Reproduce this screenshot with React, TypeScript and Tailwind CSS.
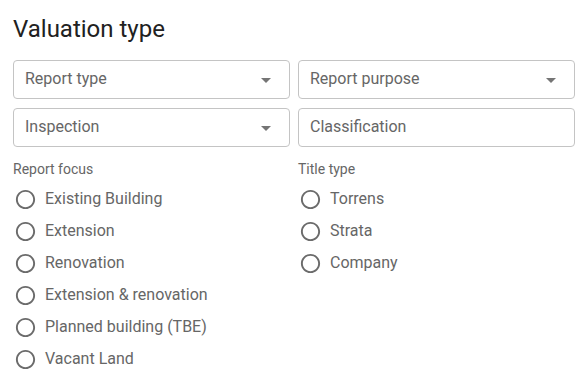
import { useState } from "react";

// --- Champs ---
function SelectField({ label }: { label: string }) {
  return (
    <div className="relative flex h-[39px] items-center rounded border border-[#c4c4c4] pb-[2px] pl-[11px] pr-3">
      <span className="text-base text-[#666]">{label}</span>
      <svg className="absolute right-[11px] top-[7px]" width="24" height="24" viewBox="0 0 24 24" fill="#757575">
        <path d="M7 10l5 5 5-5z" />
      </svg>
    </div>
  );
}

function TextField({ label }: { label: string }) {
  return (
    <div className="flex h-[39px] items-center rounded border border-[#c4c4c4] pb-[2px] pl-[11px] pr-3">
      <span className="text-base text-[#666]">{label}</span>
    </div>
  );
}

function RadioGroup({ title, options }: { title: string; options: string[] }) {
  const [value, setValue] = useState<string | null>(null);
  return (
    <div className="flex flex-col">
      <p className="text-sm leading-5 text-[#666]">{title}</p>
      <div className="mt-[4px] flex flex-col">
        {options.map((o) => (
          <label key={o} className="flex h-8 cursor-pointer items-center" onClick={() => setValue(o)}>
            <span className="flex w-[24px] justify-center">
              <svg width="23" height="23" viewBox="0 0 24 24" fill="#6b6b6b">
                <path d="M12 2C6.48 2 2 6.48 2 12s4.48 10 10 10 10-4.48 10-10S17.52 2 12 2zm0 18c-4.42 0-8-3.58-8-8s3.58-8 8-8 8 3.58 8 8-3.58 8-8 8z" />
                {value === o && <circle cx="12" cy="12" r="5" />}
              </svg>
            </span>
            <span className="ml-[8px] text-base text-[#666]">{o}</span>
          </label>
        ))}
      </div>
    </div>
  );
}

export default function App() {
  return (
    <div className="pl-[13px] pr-[10px] pt-[13px] font-['Roboto',sans-serif]">
      <h1 className="text-2xl leading-8 text-[#212121]">Valuation type</h1>
      <div className="mt-[15px] grid grid-cols-2 gap-x-[8px] gap-y-[9px]">
        <SelectField label="Report type" />
        <SelectField label="Report purpose" />
        <SelectField label="Inspection" />
        <TextField label="Classification" />
      </div>
      <div className="mt-[12px] grid grid-cols-2 gap-x-[8px]">
        <RadioGroup
          title="Report focus"
          options={["Existing Building", "Extension", "Renovation", "Extension & renovation", "Planned building (TBE)", "Vacant Land"]}
        />
        <RadioGroup title="Title type" options={["Torrens", "Strata", "Company"]} />
      </div>
    </div>
  );
}
